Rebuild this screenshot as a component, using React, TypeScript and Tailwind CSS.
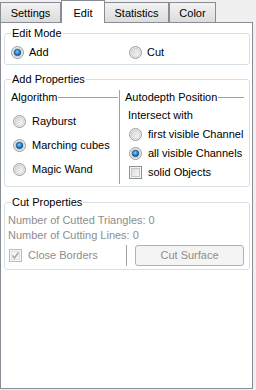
import React from "react";

function Radio({ checked = false }: { checked?: boolean }) {
  return (
    <svg width="13" height="13" viewBox="0 0 13 13" className="shrink-0">
      <defs>
        <linearGradient id="rb" x1="0" y1="0" x2="1" y2="1">
          <stop offset="0" stopColor="#d4d4d4" />
          <stop offset="1" stopColor="#f8f8f8" />
        </linearGradient>
        <radialGradient id="rd" cx="0.45" cy="0.4" r="0.6">
          <stop offset="0" stopColor="#8fd4ff" />
          <stop offset="0.5" stopColor="#2a8ad4" />
          <stop offset="1" stopColor="#0f4f86" />
        </radialGradient>
      </defs>
      <circle cx="6.5" cy="6.5" r="6" fill="#f4f4f4" stroke="#9a9a9a" strokeWidth="1" />
      <circle cx="6.5" cy="6.5" r="4.5" fill="url(#rb)" stroke="#c8c8c8" strokeWidth="0.8" />
      {checked && <circle cx="6.5" cy="6.5" r="3.3" fill="url(#rd)" stroke="#1b4f7a" strokeWidth="0.6" />}
    </svg>
  );
}

function Check({ checked = false, disabled = false }: { checked?: boolean; disabled?: boolean }) {
  return (
    <svg width="13" height="13" viewBox="0 0 13 13" className="shrink-0">
      <defs>
        <linearGradient id="cb" x1="0" y1="0" x2="1" y2="1">
          <stop offset="0" stopColor="#d8d8d8" />
          <stop offset="1" stopColor="#fafafa" />
        </linearGradient>
      </defs>
      <rect x="0.5" y="0.5" width="12" height="12" fill="#f6f6f6" stroke={disabled ? "#bcbcbc" : "#8e8f8f"} />
      <rect x="2.5" y="2.5" width="8" height="8" fill={disabled ? "#f4f4f4" : "url(#cb)"} stroke={disabled ? "#e0e0e0" : "#c6c6c6"} />
      {checked && (
        <path d="M3.5 6.5 L5.5 9 L9.5 3.5" fill="none" stroke={disabled ? "#a8a8a8" : "#333"} strokeWidth="1.5" />
      )}
    </svg>
  );
}

function Group({ title, className, children }: { title: string; className?: string; children: React.ReactNode }) {
  return (
    <fieldset className={"rounded-[3px] border border-[#d5dfe5] " + (className ?? "")}>
      <legend className="ml-[6px] px-[1px] leading-[14px]">{title}</legend>
      {children}
    </fieldset>
  );
}

function TitleLine({ title }: { title: string }) {
  return (
    <div className="flex h-[14px] items-center">
      <span className="pr-[1px]">{title}</span>
      <div className="h-px flex-1 bg-[#a0a0a0]" />
    </div>
  );
}

export default function App() {
  return (
    <div
      className="h-[390px] w-[256px] overflow-hidden bg-[#f0f0f0] text-[11px] text-black"
      style={{ fontFamily: '"Liberation Sans", Arial, sans-serif' }}
    >
      <div className="flex h-[22px] items-end">
        <div className="flex h-[20px] w-[61px] items-center justify-center border border-b-0 border-[#898c95] bg-gradient-to-b from-[#f2f2f2] to-[#dcdcdc] pt-[2px]">
          Settings
        </div>
        <div className="relative z-10 -mb-px flex h-[23px] w-[44px] items-start justify-center border border-b-0 border-[#898c95] bg-white pt-[4px]">
          Edit
        </div>
        <div className="-ml-px flex h-[20px] w-[65px] items-center justify-center border border-b-0 border-[#898c95] bg-gradient-to-b from-[#f2f2f2] to-[#dcdcdc] pt-[2px]">
          Statistics
        </div>
        <div className="flex h-[20px] w-[47px] items-center justify-center border border-b-0 border-[#898c95] bg-gradient-to-b from-[#f2f2f2] to-[#dcdcdc] pt-[2px]">
          Color
        </div>
      </div>

      <div className="h-[367px] w-[253px] border border-[#898c95] bg-white pl-[3px] pr-[2px]">
        <Group title="Edit Mode" className="mt-[3px]">
          <div className="flex pb-[5px] pl-[6px] pt-[6px]">
            <label className="flex h-[13px] w-[118px] items-center gap-[5px]">
              <Radio checked />
              <span>Add</span>
            </label>
            <label className="flex h-[13px] items-center gap-[5px]">
              <Radio />
              <span>Cut</span>
            </label>
          </div>
        </Group>

        <Group title="Add Properties" className="mt-[7px]">
          <div className="flex pb-[2px] pt-[4px]">
            <div className="w-[113px] pl-[6px]">
              <TitleLine title="Algorithm" />
              <div className="mt-[10px] flex h-[14px] items-center gap-[6px] pl-[2px]">
                <Radio />
                <span>Rayburst</span>
              </div>
              <div className="mt-[10px] flex h-[14px] items-center gap-[6px] pl-[2px]">
                <Radio checked />
                <span>Marching cubes</span>
              </div>
              <div className="mt-[10px] flex h-[14px] items-center gap-[6px] pl-[2px]">
                <Radio />
                <span>Magic Wand</span>
              </div>
            </div>
            <div className="ml-[1px] flex-1 border-l border-[#a0a0a0] pb-[5px] pl-[5px] pr-[5px]">
              <TitleLine title="Autodepth Position" />
              <div className="mt-[4px] flex h-[14px] items-center pl-[3px]">Intersect with</div>
              <div className="mt-[5px] flex h-[14px] items-center gap-[6px] pl-[4px]">
                <Radio />
                <span>first visible Channel</span>
              </div>
              <div className="mt-[5px] flex h-[14px] items-center gap-[6px] pl-[4px]">
                <Radio checked />
                <span>all visible Channels</span>
              </div>
              <div className="mt-[5px] flex h-[14px] items-center gap-[6px] pl-[4px]">
                <Check />
                <span>solid Objects</span>
              </div>
            </div>
          </div>
        </Group>

        <Group title="Cut Properties" className="mt-[8px]">
          <div className="pb-[3px] pl-[3px] pr-[5px] pt-[4px] text-[#8d8d8d]">
            <div className="flex h-[14px] items-center">Number of Cutted Triangles: 0</div>
            <div className="mt-[1px] flex h-[14px] items-center">Number of Cutting Lines: 0</div>
            <div className="mt-[3px] flex h-[21px] items-center">
              <div className="flex w-[118px] items-center gap-[6px] pl-[1px]">
                <Check checked disabled />
                <span>Close Borders</span>
              </div>
              <div className="h-[21px] w-px bg-[#a0a0a0]" />
              <button className="ml-[8px] h-[21px] flex-1 rounded-[3px] border border-[#adb2b5] bg-[#f4f4f4] text-[#8d8d8d]">
                Cut Surface
              </button>
            </div>
          </div>
        </Group>
      </div>
    </div>
  );
}
